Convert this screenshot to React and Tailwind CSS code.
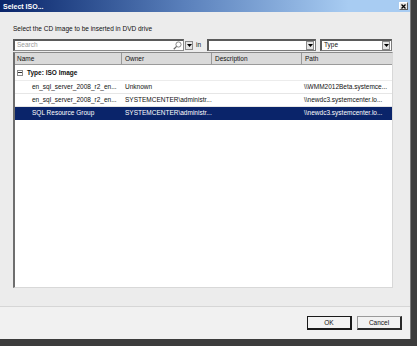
import React from "react";

const rows = [
  {
    name: "en_sql_server_2008_r2_en...",
    owner: "Unknown",
    description: "",
    path: "\\\\WMM2012Beta.systemce...",
  },
  {
    name: "en_sql_server_2008_r2_en...",
    owner: "SYSTEMCENTER\\administr...",
    description: "",
    path: "\\\\newdc3.systemcenter.lo...",
  },
  {
    name: "SQL Resource Group",
    owner: "SYSTEMCENTER\\administr...",
    description: "",
    path: "\\\\newdc3.systemcenter.lo...",
    selected: true,
  },
];

const DropArrow = () => (
  <div className="w-[8px] h-[9px] bg-[#e4e4e4] border border-[#8a8a8a] flex items-center justify-center">
    <svg width="5" height="3" viewBox="0 0 5 3">
      <path d="M0 0h5L2.5 3z" fill="#000" />
    </svg>
  </div>
);

const Combo = ({ label, className }) => (
  <div
    className={`h-[12px] bg-white border border-[#7a7a7a] border-l-2 border-t-2 border-l-[#5a5a5a] border-t-[#5a5a5a] flex items-center justify-between pl-[2px] pr-[1px] ${className}`}
  >
    <span className="leading-none">{label}</span>
    <DropArrow />
  </div>
);

const Button = ({ children, isDefault }) => (
  <div
    className={`w-[45px] h-[14px] flex items-center justify-center bg-[#f2f2f2] ${
      isDefault
        ? "border border-[#1a1a1a] border-r-2 border-b-2"
        : "border border-[#9a9a9a] border-r-2 border-b-2 border-r-[#2a2a2a] border-b-[#2a2a2a]"
    }`}
  >
    {children}
  </div>
);

export default function App() {
  return (
    <div
      className="w-[417px] h-[346px] bg-[#3c3c3c] overflow-hidden text-[6.5px] text-[#111]"
      style={{ fontFamily: '"Liberation Sans", Arial, sans-serif' }}
    >
      <div className="w-[411px] h-[339px] flex flex-col bg-[#ececec] border-r border-[#7a7a7a]">
        {/* Title bar */}
        <div className="h-[12px] flex items-center justify-between pl-[3px] pr-[2px] bg-linear-to-r from-[#0a246a] via-[#5a80bb] via-45% to-[#a8ccf2] to-85%">
          <span className="text-white font-bold text-[7px] leading-none">Select ISO...</span>
          <div className="w-[9px] h-[8px] bg-[#e6e6e6] border border-[#5a5a5a] border-l-white border-t-white flex items-center justify-center">
            <svg width="5" height="5" viewBox="0 0 5 5">
              <path d="M0.5 0.5l4 4M4.5 0.5l-4 4" stroke="#000" strokeWidth="1.3" />
            </svg>
          </div>
        </div>

        {/* Body */}
        <div className="flex-1 flex flex-col bg-[#ececec]">
          <div className="pl-[13px] pr-[18px] flex flex-col">
            <div className="mt-[13px] h-[8px] leading-[8px]">
              Select the CD image to be inserted in DVD drive
            </div>

            {/* Toolbar */}
            <div className="mt-[6px] h-[12px] flex items-center">
              <div className="w-[171px] h-[12px] bg-white border border-[#8a8a8a] border-l-2 border-t-2 border-l-[#5a5a5a] border-t-[#5a5a5a] flex items-center justify-between pl-[2px] pr-[1px]">
                <span className="text-[#9a9a9a] leading-none">Search</span>
                <svg width="9" height="9" viewBox="0 0 9 9">
                  <circle cx="5.5" cy="3.5" r="2.6" fill="none" stroke="#7a7a7a" strokeWidth="0.9" />
                  <path d="M3.6 5.4L0.8 8.2" stroke="#6a6a6a" strokeWidth="1.3" />
                </svg>
              </div>
              <div className="ml-[1px]">
                <DropArrow />
              </div>
              <span className="ml-[3px] w-[11px] leading-none">in</span>
              <Combo label="" className="w-[109px]" />
              <Combo label="Type" className="w-[72px] ml-[4px]" />
            </div>

            {/* Grid */}
            <div className="mt-[1px] h-[236px] w-[380px] bg-white border-l-2 border-t border-l-[#6e6e6e] border-t-[#8a8a8a] border-r border-b border-r-[#d8d8d8] border-b-[#d8d8d8] flex flex-col">
              <div className="h-[12px] flex bg-[#dadada] border-b border-[#9a9a9a]">
                <div className="w-[107px] pl-[2px] border-r border-[#9a9a9a] flex items-center">Name</div>
                <div className="w-[90px] pl-[3px] border-r border-[#9a9a9a] flex items-center">Owner</div>
                <div className="w-[90px] pl-[3px] border-r border-[#9a9a9a] flex items-center">Description</div>
                <div className="flex-1 pl-[3px] flex items-center">Path</div>
              </div>

              <div className="h-[16px] flex items-center pl-[2px] border-b border-[#ececec]">
                <div className="w-[6px] h-[6px] border border-[#8a8a8a] flex items-center justify-center">
                  <div className="w-[4px] h-[1px] bg-[#333]" />
                </div>
                <span className="ml-[4px] font-bold">Type: ISO Image</span>
              </div>

              {rows.map((r, i) => (
                <div
                  key={i}
                  className={`h-[13px] flex items-center border-b ${
                    r.selected
                      ? "bg-[#0a246a] text-white border-[#0a246a]"
                      : "border-[#e6e6e6]"
                  }`}
                >
                  <div className="w-[107px] pl-[17px] whitespace-nowrap overflow-hidden">{r.name}</div>
                  <div className="w-[90px] pl-[3px] whitespace-nowrap overflow-hidden">{r.owner}</div>
                  <div className="w-[90px] pl-[3px]">{r.description}</div>
                  <div className="flex-1 pl-[2px] whitespace-nowrap overflow-hidden">{r.path}</div>
                </div>
              ))}
            </div>
          </div>

          {/* Footer */}
          <div className="mt-[18px] flex-1 flex flex-col bg-[#f1f1f1] border-t border-[#d6d6d6]">
            <div className="mt-[9px] flex justify-end gap-[5px] pr-[8px]">
              <Button isDefault>OK</Button>
              <Button>Cancel</Button>
            </div>
          </div>
        </div>
      </div>
    </div>
  );
}
